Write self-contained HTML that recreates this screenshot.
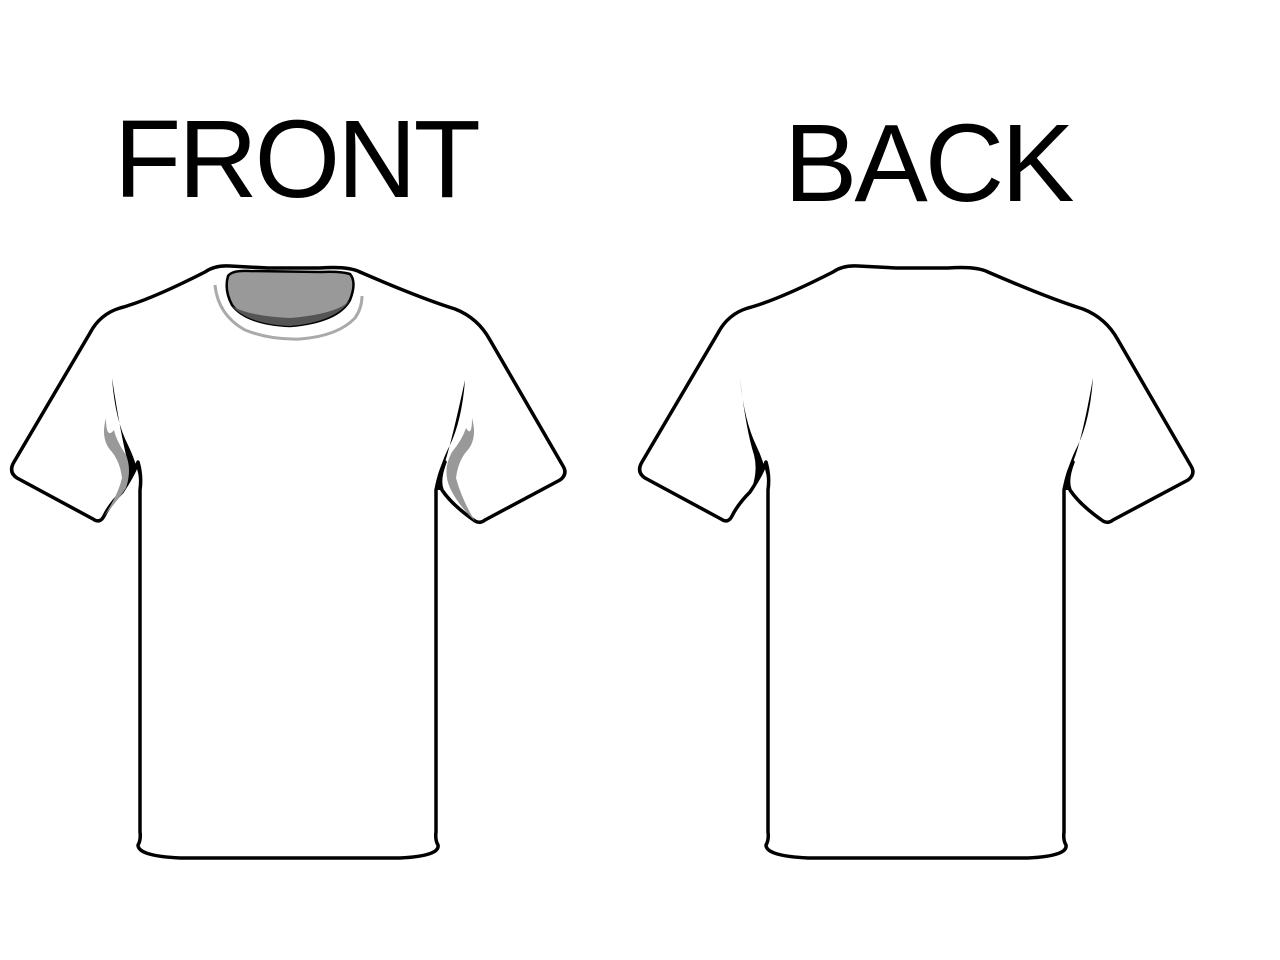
<!DOCTYPE html>
<html><head><meta charset="utf-8"><style>
html,body{margin:0;padding:0;background:#fff;width:1280px;height:960px;overflow:hidden}
svg{position:absolute;left:0;top:0}
.t{font-family:"Liberation Sans",sans-serif;font-size:110px;letter-spacing:-3px;fill:#000}
</style></head><body>
<svg width="1280" height="960" viewBox="0 0 1280 960">
<text class="t" x="114" y="197">FRONT</text>
<text class="t" x="784" y="201">BACK</text>
<defs>
<g id="shirt">
<path d="M140 490 L140 832 Q141 840 138 845 Q138 856 180 858 L400 858 Q440 856 438 845 Q435 840 436 832 L436 490 Q440 470 445 462 Q438 480 442 490 Q452 505 475 521 Q480 524 485 520 L560 480 Q568 474 563 466 L490 340 Q478 318 455 309 Q420 298 360 272 Q348 266 320 268 L268 268 L230 266 Q215 265 205 272 Q150 300 120 308 Q100 314 90 333 L14 462 Q8 472 17 478 L93 519 Q100 524 104 516 Q110 504 122 492 Q134 474 138 462 Q142 476 140 490 Z" fill="#fff" stroke="#000" stroke-width="3.5" stroke-linejoin="round"/>
</g>
</defs>
<use href="#shirt"/>
<use href="#shirt" transform="translate(628,0)"/>
<!-- front collar -->
<path d="M228 276 Q232 270 250 271 L320 272 Q340 271 350 274 Q357 282 350 300 Q338 322 290 326 Q246 324 232 305 Q224 290 228 276 Z" fill="#999" stroke="#000" stroke-width="2.5"/>
<path d="M232 306 Q248 324 290 326 Q336 322 350 300 Q338 314 290 318 Q248 316 232 306Z" fill="#555"/>
<path d="M215 285 Q218 315 245 330 Q270 340 300 339 Q338 336 355 318 Q362 308 362 296" fill="none" stroke="#aaa" stroke-width="3"/>
<!-- front left fold -->
<path d="M112 378 Q115 420 128 445 Q140 470 140 490 L138 462 Q134 474 122 492 Q130 470 126 455 Q120 430 112 378Z" fill="#000"/>
<path d="M106 418 Q100 440 112 452 Q120 462 122 478 Q118 495 104 516 Q118 500 126 488 Q132 470 126 455 Q116 440 114 430 Q106 440 106 418Z" fill="#999"/>
<!-- front right fold -->
<path d="M465 380 Q462 420 450 445 Q438 468 436 490 L442 490 Q438 480 445 462 Q452 440 465 380Z" fill="#000"/>
<path d="M472 418 Q478 440 466 452 Q458 462 456 478 Q462 500 475 521 Q458 505 450 488 Q442 470 452 452 Q462 440 466 428 Q472 438 472 418Z" fill="#999"/>
<!-- back fold lines -->
<path d="M740 378 Q744 420 756 445 Q768 470 768 490 L766 462 Q762 474 752 488 Q758 470 754 455 Q746 430 740 378Z" fill="#000"/>
<path d="M1093 378 Q1090 420 1078 445 Q1066 468 1064 490 L1070 490 Q1066 476 1073 462 Q1082 440 1093 378Z" fill="#000"/>
</svg>
</body></html>
